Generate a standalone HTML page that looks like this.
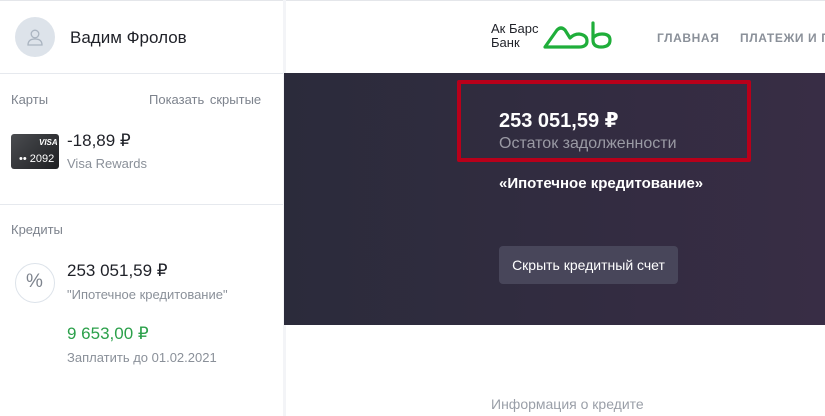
<!DOCTYPE html>
<html><head><meta charset="utf-8"><style>
*{margin:0;padding:0;box-sizing:border-box}
body{width:825px;height:416px;overflow:hidden;background:#fff;font-family:"Liberation Sans","DejaVu Sans",sans-serif;position:relative}
.a{position:absolute;white-space:nowrap}
</style></head><body>
<div class="a" style="left:0;top:0;width:825px;height:1px;background:#e4e6ea"></div>
<div class="a" style="left:283px;top:0;width:3px;height:416px;background:#f3f4f7"></div>
<div class="a" style="left:15px;top:17px;width:40px;height:40px;border-radius:50%;background:#dde3ea"></div>
<svg class="a" style="left:25px;top:27px" width="20" height="20" viewBox="0 0 20 20" fill="none" stroke="#aab4c0" stroke-width="1.3"><circle cx="10" cy="7" r="3.8"/><path d="M3,18 Q3,12 10,12 Q17,12 17,18 Z"/></svg>
<div class="a" style="left:70px;top:28px;font-size:17px;color:#1f2128">Вадим Фролов</div>
<div class="a" style="left:0;top:73px;width:283px;height:1px;background:#e6e9ee"></div>
<div class="a" style="left:11px;top:92px;font-size:13px;color:#7d838d">Карты</div>
<div class="a" style="left:149px;top:92px;font-size:13px;color:#7d838d;word-spacing:2px">Показать скрытые</div>
<div class="a" style="left:11px;top:134px;width:48px;height:35px;border-radius:3px;background:linear-gradient(135deg,#4a4c50,#1e1f22)"></div>
<div class="a" style="left:39px;top:138px;font-size:8px;font-weight:bold;color:#fff;font-style:italic">VISA</div>
<div class="a" style="left:19px;top:153px;font-size:11px;color:#fff">•• 2092</div>
<div class="a" style="left:67px;top:131px;font-size:17px;color:#1f2128">-18,89 ₽</div>
<div class="a" style="left:67px;top:156px;font-size:13px;color:#8a9099">Visa Rewards</div>
<div class="a" style="left:0;top:204px;width:283px;height:1px;background:#e6e9ee"></div>
<div class="a" style="left:11px;top:222px;font-size:13px;color:#7d838d">Кредиты</div>
<div class="a" style="left:15px;top:263px;width:40px;height:40px;border-radius:50%;border:1px solid #dde3ea"></div>
<div class="a" style="left:26px;top:271px;font-size:19px;color:#7d838d">%</div>
<div class="a" style="left:67px;top:261px;font-size:17px;color:#1f2128">253 051,59 ₽</div>
<div class="a" style="left:67px;top:287px;font-size:13px;color:#8a9099">"Ипотечное кредитование"</div>
<div class="a" style="left:67px;top:324px;font-size:17px;color:#2ba04a">9 653,00 ₽</div>
<div class="a" style="left:67px;top:350px;font-size:13px;color:#8a9099">Заплатить до 01.02.2021</div>
<div class="a" style="left:491px;top:22px;font-size:13px;color:#1f2128;line-height:14px">Ак Барс<br>Банк</div>
<svg class="a" style="left:540px;top:18px" width="80" height="34" viewBox="0 0 80 34" fill="none" stroke="#1fae3a" stroke-width="3.2" stroke-linecap="round" stroke-linejoin="round"><path d="M30,29 L5,29 L17,12 Q21,8 25,12 L30,20 Q34,16 39,16 Q47,17 47,23 Q47,29 39,29 L31,29"/><path d="M53,5 L53,22 Q53,29 61,29 Q70,29 70,22 Q70,16 62,16 Q56,16 53,20"/></svg>
<div class="a" style="left:657px;top:31px;font-size:12px;color:#8a9099;font-weight:bold;letter-spacing:0.6px">ГЛАВНАЯ</div>
<div class="a" style="left:740px;top:31px;font-size:12px;color:#8a9099;font-weight:bold;letter-spacing:0.6px">ПЛАТЕЖИ И П</div>
<div class="a" style="left:284px;top:73px;width:541px;height:252px;background:linear-gradient(90deg,#2b2b3b,#382d45)"></div>
<div class="a" style="left:457px;top:80px;width:294px;height:82px;border:4px solid #b8001a;border-radius:2px"></div>
<div class="a" style="left:499px;top:108px;font-size:20px;font-weight:bold;color:#fff">253 051,59 ₽</div>
<div class="a" style="left:499px;top:135px;font-size:16px;color:#9a9aa4">Остаток задолженности</div>
<div class="a" style="left:499px;top:175px;font-size:15px;font-weight:bold;color:#fff">«Ипотечное кредитование»</div>
<div class="a" style="left:499px;top:246px;width:179px;height:38px;border-radius:4px;background:#48465a;color:#fff;font-size:14px;text-align:center;line-height:38px">Скрыть кредитный счет</div>
<div class="a" style="left:491px;top:396px;font-size:14px;color:#9a9fa8">Информация о кредите</div>
</body></html>
